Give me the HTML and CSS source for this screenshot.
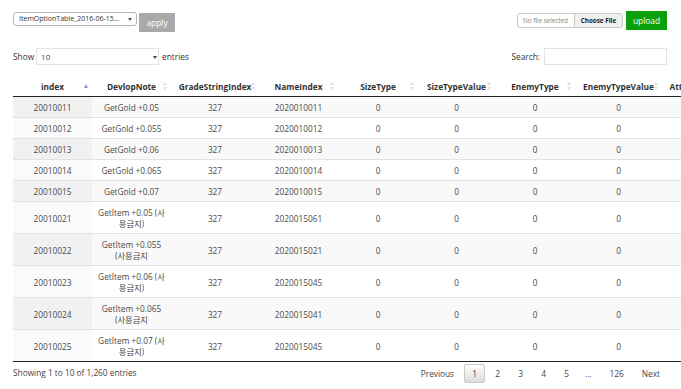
FILE: index.html
```html
<!DOCTYPE html>
<html>
<head>
    <title>ItemOptionTable</title>
    <link rel="stylesheet" href="styles.css">
</head>
<body>
    <div class="toolbar">
        <div class="toolbar-left">
            <span class="select-wrap small">
                <select class="table-select">
                    <option>ItemOptionTable_2016-06-15...</option>
                </select>
            </span>
            <button type="button" class="btn-apply">apply</button>
        </div>
        <div class="toolbar-right">
            <div class="file-box">
                <span class="file-name">No file selected</span>
                <span class="file-choose">Choose File</span>
            </div>
            <button type="button" class="btn-upload">upload</button>
        </div>
    </div>

    <div class="dt-controls">
        <div class="dt-length">
            Show
            <span class="select-wrap length">
                <select class="length-select">
                    <option>10</option>
                </select>
            </span>
            entries
        </div>
        <div class="dt-search">
            Search:
            <input type="text" class="search-input">
        </div>
    </div>

    <table class="data-table">
        <colgroup>
            <col style="width:79px">
            <col style="width:79px">
            <col style="width:88px">
            <col style="width:79px">
            <col style="width:80px">
            <col style="width:77px">
            <col style="width:80px">
            <col style="width:87px">
            <col style="width:62px">
        </colgroup>
        <thead>
            <tr>
                <th class="sort-asc">index</th>
                <th class="sort-both">DevlopNote</th>
                <th class="sort-both">GradeStringIndex</th>
                <th class="sort-both">NameIndex</th>
                <th class="sort-both">SizeType</th>
                <th class="sort-both">SizeTypeValue</th>
                <th class="sort-both">EnemyType</th>
                <th class="sort-both">EnemyTypeValue</th>
                <th class="sort-both">AttackType</th>
            </tr>
        </thead>
        <tbody id="tableBody"></tbody>
    </table>

    <div class="dt-footer">
        <div class="dt-info">Showing 1 to 10 of 1,260 entries</div>
        <div class="dt-paginate">
            <a class="page-btn">Previous</a>
            <a class="page-btn current">1</a>
            <a class="page-btn">2</a>
            <a class="page-btn">3</a>
            <a class="page-btn">4</a>
            <a class="page-btn">5</a>
            <span class="ellipsis">…</span>
            <a class="page-btn">126</a>
            <a class="page-btn">Next</a>
        </div>
    </div>

    <script>
        const rows = [
            ['20010011', 'GetGold +0.05', '327', '2020010011'],
            ['20010012', 'GetGold +0.055', '327', '2020010012'],
            ['20010013', 'GetGold +0.06', '327', '2020010013'],
            ['20010014', 'GetGold +0.065', '327', '2020010014'],
            ['20010015', 'GetGold +0.07', '327', '2020010015'],
            ['20010021', 'GetItem +0.05 (사용금지)', '327', '2020015061'],
            ['20010022', 'GetItem +0.055 (사용금지', '327', '2020015021'],
            ['20010023', 'GetItem +0.06 (사용금지)', '327', '2020015045'],
            ['20010024', 'GetItem +0.065 (사용금지', '327', '2020015041'],
            ['20010025', 'GetItem +0.07 (사용금지)', '327', '2020015045']
        ];

        const tbody = document.getElementById('tableBody');
        rows.forEach(function (row, i) {
            const tr = document.createElement('tr');
            tr.className = i % 2 === 0 ? 'odd' : 'even';
            const cells = row.concat(['0', '0', '0', '0', '0']);
            cells.forEach(function (value, j) {
                const td = document.createElement('td');
                if (j === 0) td.className = 'sorted';
                td.innerText = value;
                tr.appendChild(td);
            });
            tbody.appendChild(tr);
        });
    </script>
</body>
</html>
```

FILE: styles.css
```css
html, body {
    overflow: hidden;
}
body {
    margin: 0;
    padding: 0 13px;
    font-family: "Open Sans", "Noto Sans CJK KR", sans-serif;
    font-size: 8.3px;
    color: #333;
    background-color: #fff;
}

/* top toolbar */
.toolbar {
    display: flex;
    justify-content: space-between;
    align-items: flex-start;
    padding-top: 11px;
    height: 22px;
}
.toolbar-left, .toolbar-right {
    display: flex;
    align-items: flex-start;
}
.select-wrap {
    position: relative;
    display: inline-block;
}
.select-wrap::after {
    content: "";
    position: absolute;
    top: 50%;
    margin-top: -1px;
    border-left: 2.5px solid transparent;
    border-right: 2.5px solid transparent;
    border-top: 3px solid #555;
}
.select-wrap.small {
    margin-top: 1px;
}
.select-wrap.small::after {
    right: 5px;
}
.select-wrap.length::after {
    right: 5px;
    border-top-color: #444;
}
select {
    -webkit-appearance: none;
    appearance: none;
    font-family: inherit;
    outline: none;
    background-color: #fff;
}
.table-select {
    width: 124px;
    height: 14px;
    padding: 0 0 0 5px;
    border: 1px solid #b5b5b5;
    border-radius: 3px;
    font-size: 7px;
    color: #333;
    line-height: 12px;
}
.btn-apply {
    width: 36px;
    height: 19px;
    margin: 2px 0 0 2px;
    padding: 0;
    border: none;
    background-color: #a9a9a9;
    color: #fff;
    font-family: inherit;
    font-size: 8.4px;
}
.file-box {
    display: flex;
    width: 104px;
    height: 13px;
    margin-top: 2px;
    border: 1px solid #c8c8c8;
    border-radius: 3px;
    overflow: hidden;
    font-size: 6.3px;
    line-height: 13px;
}
.file-name {
    flex: 1;
    padding-left: 5px;
    color: #888;
}
.file-choose {
    width: 47px;
    text-align: center;
    border-left: 1px solid #c8c8c8;
    background-color: #f0f0f0;
    font-weight: bold;
    color: #222;
}
.btn-upload {
    width: 41px;
    height: 19px;
    margin: 0 1px 0 3px;
    padding: 0;
    border: none;
    background-color: #0aa00a;
    color: #fff;
    font-family: inherit;
    font-size: 8.4px;
}

/* datatables controls */
.dt-controls {
    display: flex;
    justify-content: space-between;
    align-items: center;
    margin-top: 15px;
    height: 17px;
}
.dt-length, .dt-search {
    display: flex;
    align-items: center;
}
.length-select {
    width: 123px;
    height: 17px;
    margin: 0 3px 0 2px;
    padding: 0 0 0 4px;
    border: 1px solid #e4e4e4;
    font-size: 8px;
    color: #444;
}
.search-input {
    width: 123px;
    height: 17px;
    margin: 0 1px 0 4px;
    padding: 0;
    box-sizing: border-box;
    border: 1px solid #e4e4e4;
    outline: none;
}

/* table */
.data-table {
    table-layout: fixed;
    width: 711px;
    margin-top: 11px;
    border-collapse: collapse;
}
th, td {
    line-height: 11px;
    text-align: center;
    white-space: normal;
}
th {
    position: relative;
    padding: 5px 6px 4px;
    font-weight: bold;
    border-bottom: 1px solid #222;
}
td {
    padding: 5px 6px 4px;
    border-top: 1px solid #e2e2e2;
    color: #4a4a4a;
}
tr.odd td {
    background-color: #f9f9f9;
}
tr.odd td.sorted {
    background-color: #f1f1f1;
}
tr.even td.sorted {
    background-color: #fafafa;
}
tbody tr:last-child td {
    border-bottom: 1px solid #222;
}

/* sort indicators */
th::before, th::after {
    content: "";
    position: absolute;
    right: 4px;
    border-left: 2.5px solid transparent;
    border-right: 2.5px solid transparent;
}
th.sort-asc::after {
    top: 8px;
    border-bottom: 4px solid #9191d6;
}
th.sort-asc::before {
    display: none;
}
th.sort-both::before {
    top: 6px;
    border-bottom: 3px solid #e0e0e0;
}
th.sort-both::after {
    top: 11px;
    border-top: 3px solid #e0e0e0;
}

/* footer */
.dt-footer {
    display: flex;
    justify-content: space-between;
    align-items: flex-start;
    padding-top: 2px;
}
.dt-info {
    padding-top: 3px;
    color: #444;
}
.dt-paginate {
    display: flex;
    align-items: center;
}
.page-btn {
    min-width: 5px;
    margin-left: 2px;
    padding: 3px 7px;
    line-height: 11px;
    border: 1px solid transparent;
    border-radius: 2px;
    color: #444;
    text-align: center;
    cursor: pointer;
}
.page-btn.current {
    border-color: #cacaca;
    background: linear-gradient(to bottom, #fff 0%, #dcdcdc 100%);
}
.ellipsis {
    padding: 0 8px;
    color: #444;
}
```
